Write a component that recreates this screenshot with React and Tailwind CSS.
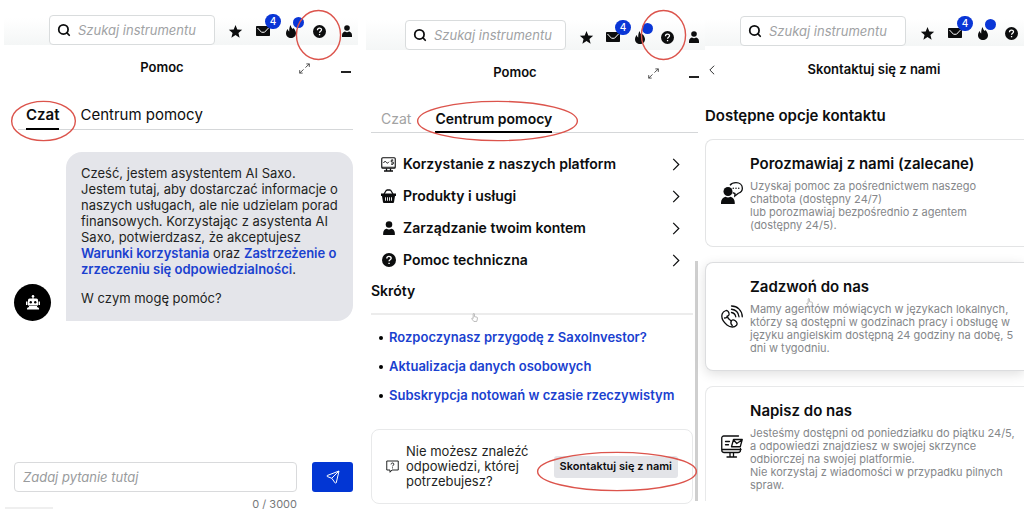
import React from "react";
import { Search } from "lucide-react";

function Ring({ className }) {
  return (
    <svg
      viewBox="0 0 100 100"
      preserveAspectRatio="none"
      className={"pointer-events-none absolute z-10 max-w-none overflow-visible " + className}
      fill="none"
      stroke="#dc544c"
      strokeWidth="1.4"
      aria-hidden="true"
    >
      <ellipse cx="50" cy="50" rx="49" ry="49" vectorEffect="non-scaling-stroke" />
    </svg>
  );
}

function StarIcon() {
  return (
    <svg viewBox="0 0 24 24" className="h-[15px] w-[15px]" fill="currentColor" aria-hidden="true">
      <path d="M12 1.5l2.9 7.3 7.8.5-6 5 1.900 7.700L12 17.700 5.400 22l1.900-7.700-6-5 7.800-.5z" />
    </svg>
  );
}

function MailIcon() {
  return (
    <svg viewBox="0 0 28 20" className="h-[10px] w-[14px]" aria-hidden="true">
      <rect width="28" height="20" rx="1.500" fill="currentColor" />
      <path d="M3 4l8 8.500h6L25 4" fill="none" stroke="#fff" strokeWidth="2" />
    </svg>
  );
}

function FlameIcon() {
  return (
    <svg viewBox="0 0 20 26" className="h-[13px] w-[10px]" aria-hidden="true">
      <path
        d="M9.500 0c.5 4.500 2 6 4 8l1.500-2c3 3.500 5 7 5 10.500C20 22 15.500 26 10 26S0 22 0 16.500C0 12 2.500 9 4 8c0 2 .5 4 2.500 5C6 8 7 3 9.500 0z"
        fill="currentColor"
      />
    </svg>
  );
}

function HelpIcon({ className }) {
  return (
    <svg viewBox="0 0 24 24" className={className} aria-hidden="true">
      <circle cx="12" cy="12" r="12" fill="currentColor" />
      <path
        d="M8.300 9.500c0-5 7.400-4.600 7.400-.6 0 2.700-3.600 2.600-3.600 5.400M12.100 16.600v2.400"
        fill="none"
        stroke="#fff"
        strokeWidth="2.400"
      />
    </svg>
  );
}

function PersonIcon({ className }) {
  return (
    <svg viewBox="0 0 20 24" className={className} fill="currentColor" aria-hidden="true">
      <circle cx="10" cy="6" r="5.600" />
      <path d="M0 24v-3.500C0 15.500 4 13.500 6 13.200c2.500 1.600 5.500 1.600 8 0 2 .3 6 2.300 6 7.300V24z" />
    </svg>
  );
}

function ExpandIcon() {
  return (
    <svg viewBox="0 0 24 24" className="h-[11px] w-[11px]" fill="none" stroke="#333" strokeWidth="1.800" aria-hidden="true">
      <path d="M16 2h6.500v6.500M22.500 2L14 10M8 22H1.500v-6.500M1.500 22L10 14" />
    </svg>
  );
}

function ChevronRight() {
  return (
    <svg viewBox="0 0 8 14" className="h-[13px] w-[8px]" fill="none" stroke="currentColor" strokeWidth="1.300" aria-hidden="true">
      <path d="M1 1l6 6-6 6" />
    </svg>
  );
}

function RobotIcon() {
  return (
    <svg viewBox="0 0 28 30" className="h-[15px] w-[14px]" aria-hidden="true">
      <g fill="#fff">
        <circle cx="14" cy="2.500" r="2.500" />
        <path d="M13 3h2v5h-2zM7 7h14a3 3 0 013 3v11H4V10a3 3 0 013-3zM0 13h3v7H0zM25 13h3v7h-3zM6 22h16v2H6zM2 29a5 4 0 015-5h14a5 4 0 015 5z" />
      </g>
      <circle cx="9.500" cy="14.500" r="2.400" />
      <circle cx="18.500" cy="14.500" r="2.400" />
    </svg>
  );
}

function HandCursor({ className }) {
  return (
    <svg viewBox="0 0 16 20" className={className} fill="#fff" stroke="#9a9a9a" strokeWidth="1.500" aria-hidden="true">
      <path d="M5 12V2.500a1.500 1.500 0 013 0V8l5.500 1.300c1 .3 1.500 1 1.300 2L14 16l-1 3H6.500L2 13.500c-1-1.500.5-2.500 1.500-1.800z" />
    </svg>
  );
}

function PlatformIcon() {
  return (
    <svg viewBox="0 0 30 30" className="h-[15px] w-[15px]" fill="none" stroke="currentColor" strokeWidth="2.200" aria-hidden="true">
      <rect x="1.500" y="1.500" width="27" height="21" rx="2" />
      <path d="M2 20.500h26M5 12c2-4 4-4 5.500-1.500s3 2.500 5.500-1M24.500 6.500h-4v3.500h4v4h-4.500M22.300 4.500v2M22.300 14v2" strokeWidth="1.800" />
      <path d="M11 23v4M19 23v4M6 28h18" strokeWidth="2.600" />
    </svg>
  );
}

function BasketIcon() {
  return (
    <svg viewBox="0 0 30 28" className="h-[14px] w-[15px]" aria-hidden="true">
      <path d="M6 10l5-8M24 10l-5-8M11 2h8" fill="none" stroke="currentColor" strokeWidth="2.600" />
      <path d="M0 9h30v5h-2l-2 12.500a2 2 0 01-2 1.500H6a2 2 0 01-2-1.500L2 14H0z" fill="currentColor" />
      <path d="M9 16.500v7M13 16.500v7M17 16.500v7M21 16.500v7" stroke="#fff" strokeWidth="1.800" />
    </svg>
  );
}

function QuestionBubbleIcon() {
  return (
    <svg viewBox="0 0 26 26" className="h-[13px] w-[13px] shrink-0" fill="none" stroke="currentColor" strokeWidth="1.800" aria-hidden="true">
      <path d="M1.500 2h23v18H12l-4 4.500V20H1.500z" strokeLinejoin="round" />
      <path d="M10.200 8.800c0-3.800 5.600-3.600 5.600-.4 0 2.200-2.800 2.200-2.800 4.400M13 14.800v2" />
    </svg>
  );
}

function AgentChatIcon() {
  return (
    <svg viewBox="0 0 44 44" className="h-[22px] w-[22px] shrink-0" aria-hidden="true">
      <circle cx="14" cy="19" r="9" fill="currentColor" />
      <path d="M0 44v-3c0-6 4-10 9-11.500 3 2 7 2 10 0 5 1.500 8.500 5.500 8.500 11.500v3z" fill="currentColor" />
      <path d="M18 6.500C21 2.500 25.500 1.300 30 1.300c7.500 0 12.700 4.700 12.700 11 0 5-3.200 8.700-8 10.200L27.500 28l.3-5c-2-.3-3.300-1-4.500-1.700" fill="none" stroke="currentColor" strokeWidth="2.600" />
      <g fill="currentColor">
        <circle cx="24.500" cy="12.500" r="1.500" />
        <circle cx="30" cy="12.500" r="1.500" />
        <circle cx="35.500" cy="12.500" r="1.500" />
      </g>
    </svg>
  );
}

function PhoneIcon() {
  return (
    <svg viewBox="0 0 44 46" className="h-[23px] w-[22px] shrink-0" fill="none" stroke="currentColor" strokeWidth="2.600" strokeLinecap="round" strokeLinejoin="round" aria-hidden="true">
      <path d="M9 11.500c3-1.500 6 1 7 5 1 3.500-1.500 5.500-3.500 6 1 4.500 4 7.500 8 9.500 1.500-2.500 4.500-3 8-.5 4 3 4.500 6.500 2.500 9-4 4.500-12 5-19-.5C4 33.500 0 25 2.500 17.500 4 14 6 12.500 9 11.500z" />
      <path d="M7 26c4 0 5.500-1.500 5.500-3.500M20.500 32c-1.500 3-1 6 2 9" />
      <path d="M21 2c12 0 21.500 9.500 21.500 21.500M21 8.500c8 1 14 7 15 15M21 15c4.500.8 7.700 4 8.500 8.500" />
    </svg>
  );
}

function MailDesktopIcon() {
  return (
    <svg viewBox="0 0 44 46" className="h-[23px] w-[22px] shrink-0" fill="none" stroke="currentColor" strokeWidth="2.600" strokeLinecap="round" strokeLinejoin="round" aria-hidden="true">
      <path d="M35 2H5.500a4 4 0 00-4 4v24a5 5 0 005 5H34a5 5 0 005-5v-3M2 29h38" />
      <path d="M18 36v7M25 36v7M12 44h19" />
      <path d="M9 13h8M9 19.500h6" />
      <path d="M25 9h17.500l-4 14.500H21zM25 10l6.500 7L42 10" />
    </svg>
  );
}

function IconButton({ label, children }) {
  return (
    <button type="button" aria-label={label} className="relative flex h-5 w-5 shrink-0 items-center justify-center">
      {children}
    </button>
  );
}

function TopBar({ className, iconClass, ring, profile }) {
  return (
    <div className={"flex items-end bg-linear-to-b from-white from-40% to-[#f4f6f6] " + className}>
      <div className="flex h-[30px] min-w-0 flex-1 items-center gap-[7px] rounded-[4px] border border-[#d9dcdd] bg-white pl-[7px]">
        <Search className="h-[14px] w-[14px] shrink-0" strokeWidth={3} aria-hidden="true" />
        <input
          type="search"
          aria-label="Szukaj instrumentu"
          placeholder="Szukaj instrumentu"
          className="h-full w-full min-w-0 bg-transparent text-[13px] italic outline-none placeholder:text-[#a0a2a4]"
        />
      </div>
      <div className={"flex items-center " + iconClass}>
        <IconButton label="Ulubione">
          <StarIcon />
        </IconButton>
        <IconButton label="Wiadomości">
          <MailIcon />
          <span className="absolute -top-[7px] left-3 flex h-[15px] w-4 items-center justify-center rounded-full bg-[#0a36d6] text-[10px] font-medium text-white">
            4
          </span>
        </IconButton>
        <IconButton label="Aktualności">
          <FlameIcon />
          <span className="absolute -top-1 left-3 h-[11px] w-[11px] rounded-full bg-[#0a36d6]" />
        </IconButton>
        <IconButton label="Pomoc">
          <HelpIcon className="h-[13px] w-[13px]" />
          {ring && <Ring className={ring} />}
        </IconButton>
        {profile && (
          <IconButton label="Profil">
            <PersonIcon className="h-[12px] w-[10px]" />
          </IconButton>
        )}
      </div>
    </div>
  );
}

function PanelHeader({ className }) {
  return (
    <div className={"flex h-[46px] items-center " + className}>
      <h2 className="flex-1 text-center text-[13px] font-semibold">Pomoc</h2>
      <button type="button" aria-label="Rozwiń" className="flex h-5 w-5 items-center justify-center">
        <ExpandIcon />
      </button>
      <button type="button" aria-label="Minimalizuj" className="flex h-5 w-5 items-center justify-center pt-2">
        <span className="h-[2px] w-[10px] bg-[#222]" />
      </button>
    </div>
  );
}

function Tab({ active, muted, ring, children }) {
  return (
    <button
      type="button"
      role="tab"
      aria-selected={!!active}
      className={
        "relative -mb-px h-[29px] border-b-2 pt-[2px] whitespace-nowrap " +
        (active ? "border-black font-semibold" : "border-transparent") +
        (muted ? " text-[#a3a3a3]" : "")
      }
    >
      {children}
      {ring && <Ring className={ring} />}
    </button>
  );
}

function ChatPanel() {
  return (
    <section className="flex min-w-0 flex-col">
      <TopBar
        className="mr-2 ml-1 h-[45px] pr-px pl-[45px]"
        iconClass="mb-1 ml-[10px] gap-2"
        ring="-top-[11px] -left-[13px] h-[50px] w-[45px]"
        profile
      />
      <PanelHeader className="gap-[22px] pr-[10px] pl-[52px]" />
      <div role="tablist" className="mt-[10px] mr-[13px] ml-[18px] flex h-[29px] gap-[21px] border-b border-[#d5d7d9] pl-2 text-[15px]">
        <Tab active ring="top-0 -left-[15px] h-[40px] w-[65px]">Czat</Tab>
        <Tab>Centrum pomocy</Tab>
      </div>
      <div className="mt-[22px] mr-[13px] ml-[14px] flex items-end gap-[15px]">
        <div className="flex h-[37px] w-[37px] shrink-0 items-center justify-center rounded-full bg-black">
          <RobotIcon />
        </div>
        <div className="flex-1 rounded-2xl rounded-bl-none bg-[#e4e5ea] pt-[13px] pr-3 pb-[15px] pl-[15px] text-[13px] leading-4 text-[#1e1f22]">
          <p>
            Cześć, jestem asystentem AI Saxo.
            <br />
            Jestem tutaj, aby dostarczać informacje o naszych usługach, ale nie udzielam porad finansowych. Korzystając z
            asystenta AI Saxo, potwierdzasz, że akceptujesz{" "}
            <a href="#warunki" className="font-semibold text-[#1a41cf]">Warunki korzystania</a> oraz{" "}
            <a href="#zastrzezenie" className="font-semibold text-[#1a41cf]">Zastrzeżenie o zrzeczeniu się odpowiedzialności</a>.
          </p>
          <p className="mt-[13px]">W czym mogę pomóc?</p>
        </div>
      </div>
      <form className="mt-auto mr-[13px] ml-[14px] flex gap-[15px]" onSubmit={(e) => e.preventDefault()}>
        <input
          type="text"
          aria-label="Zadaj pytanie tutaj"
          placeholder="Zadaj pytanie tutaj"
          className="h-[30px] min-w-0 flex-1 rounded-[4px] border border-[#d9dadc] px-2 text-[13px] italic outline-none placeholder:text-[#999b9d]"
        />
        <button type="submit" aria-label="Wyślij" className="flex h-[30px] w-[41px] items-center justify-center rounded-[3px] bg-[#0236d4]">
          <svg viewBox="0 0 28 28" className="h-[14px] w-[14px]" fill="none" stroke="#fff" strokeWidth="2" strokeLinejoin="round" aria-hidden="true">
            <path d="M26 2L2.500 11c-1 .5-1 1.500 0 2l9 3.500L18 25.500c.5 1 2 1 2.500 0zM11.500 16.500L26 2" />
          </svg>
        </button>
      </form>
      <div className="mt-1 mr-[69px] mb-[14px] ml-[5px] flex items-center justify-between">
        <span className="mt-2 h-[2px] w-12 bg-[#efefef]" />
        <span className="text-[11px] leading-4 text-[#76787a]">0 / 3000</span>
      </div>
    </section>
  );
}

const topics = [
  { label: "Korzystanie z naszych platform", icon: <PlatformIcon /> },
  { label: "Produkty i usługi", icon: <BasketIcon /> },
  { label: "Zarządzanie twoim kontem", icon: <PersonIcon className="h-[14px] w-[12px]" /> },
  { label: "Pomoc techniczna", icon: <HelpIcon className="h-[14px] w-[14px]" /> },
];

const shortcuts = [
  "Rozpoczynasz przygodę z SaxoInvestor?",
  "Aktualizacja danych osobowych",
  "Subskrypcja notowań w czasie rzeczywistym",
];

function HelpCentrePanel() {
  return (
    <section className="relative min-w-0">
      <TopBar
        className="h-[50px] pr-px pl-[39px]"
        iconClass="mb-[3px] ml-[10px] gap-[7px]"
        ring="-top-[17px] -left-[16px] h-[50px] w-[45px]"
        profile
      />
      <PanelHeader className="gap-[21px] pr-px pl-[42px]" />
      <div role="tablist" className="mt-2 mr-[7px] ml-[5px] flex h-[29px] gap-6 border-b border-[#d5d7d9] pl-[10px] text-sm">
        <Tab muted>Czat</Tab>
        <Tab active ring="-top-[3px] -left-[19px] h-[40px] w-[163px]">Centrum pomocy</Tab>
      </div>
      <div className="mr-3 ml-[5px]">
        <ul className="mt-[15px]">
          {topics.map((topic) => (
            <li key={topic.label}>
              <button type="button" className="flex h-8 w-full items-center gap-[7px] pr-[13px] pl-[10px] text-left text-sm font-semibold">
                <span className="flex w-[15px] shrink-0 justify-center">{topic.icon}</span>
                <span className="flex-1">{topic.label}</span>
                <ChevronRight />
              </button>
            </li>
          ))}
        </ul>
        <div className="relative mt-[5px] border-b-2 border-[#ececec] pb-3">
          <h3 className="text-sm leading-5 font-semibold">Skróty</h3>
          <HandCursor className="absolute -bottom-[9px] left-[100px] h-[9px] w-[7px]" />
        </div>
        <ul className="mt-2 pl-2">
          {shortcuts.map((text) => (
            <li key={text} className="flex h-[29px] items-center gap-[6px]">
              <span className="h-1 w-1 shrink-0 rounded-full bg-black" />
              <a href="#skrot" className="text-[13px] font-semibold whitespace-nowrap text-[#1a41cf]">{text}</a>
            </li>
          ))}
        </ul>
        <div className="mt-[19px] flex items-center gap-[7px] rounded-lg border border-[#e8e9ea] py-[14px] pr-[14px] pl-[14px]">
          <QuestionBubbleIcon />
          <p className="flex-1 text-[13px] leading-[15px] text-[#1e1f22]">
            Nie możesz znaleźć
            <br />
            odpowiedzi, której
            <br />
            potrzebujesz?
          </p>
          <button type="button" className="relative h-[22px] shrink-0 rounded-[3px] bg-[#e3e4e8] px-[6px] text-[11px] font-semibold">
            Skontaktuj się z nami
            <Ring className="-top-[4px] -left-[18px] h-[39px] w-[162px]" />
          </button>
        </div>
      </div>
      <div className="absolute top-[261px] right-[7px] h-[240px] w-[3px] bg-[#cfcfcf]" />
    </section>
  );
}

function ContactCard({ icon, title, children, className }) {
  return (
    <article className={"flex items-center gap-[7px] border-l border-t bg-white pt-[14px] pr-1 pl-[15px] " + className}>
      {icon}
      <div>
        <h4 className="text-[15px] leading-5 font-semibold">{title}</h4>
        <p className="mt-[6px] text-[11px] leading-[13px] text-[#85878a]">{children}</p>
      </div>
    </article>
  );
}

function ContactPanel() {
  return (
    <section className="min-w-0">
      <TopBar className="h-[46px] pr-[3px] pl-[35px]" iconClass="mb-[3px] ml-[11px] gap-2" />
      <div className="flex h-[47px] items-center">
        <button type="button" aria-label="Wstecz" className="flex h-5 w-[14px] items-center justify-center">
          <svg viewBox="0 0 7 11" className="h-[10px] w-[6px]" fill="none" stroke="currentColor" aria-hidden="true">
            <path d="M6 0.500l-5 5 5 5" />
          </svg>
        </button>
        <h2 className="ml-[5px] flex-1 text-center text-[13px] font-semibold">Skontaktuj się z nami</h2>
      </div>
      <h3 className="mt-[13px] text-[15px] leading-5 font-semibold">Dostępne opcje kontaktu</h3>
      <div className="mt-[13px] flex flex-col gap-[15px]">
        <ContactCard
          icon={<AgentChatIcon />}
          title="Porozmawiaj z nami (zalecane)"
          className="rounded-l-lg border-b border-[#e3e4e5] pb-[14px]"
        >
          Uzyskaj pomoc za pośrednictwem naszego
          <br />
          chatbota (dostępny 24/7)
          <br />
          lub porozmawiaj bezpośrednio z agentem
          <br />
          (dostępny 24/5).
        </ContactCard>
        <div className="relative">
          <ContactCard
            icon={<PhoneIcon />}
            title="Zadzwoń do nas"
            className="rounded-l-lg border-b border-[#dcdddf] pb-[15px] shadow-[0_3px_12px_rgba(0,0,0,0.13)]"
          >
            Mamy agentów mówiących w językach lokalnych, którzy są dostępni w godzinach pracy i obsługę w języku
            angielskim dostępną 24 godziny na dobę, 5 dni w tygodniu.
          </ContactCard>
          <HandCursor className="absolute top-[36px] left-[101px] h-[9px] w-[7px]" />
        </div>
        <ContactCard
          icon={<MailDesktopIcon />}
          title="Napisz do nas"
          className="rounded-tl-lg border-[#e8e9ea] pb-[9px]"
        >
          Jesteśmy dostępni od poniedziałku do piątku 24/5,
          <br />
          a odpowiedzi znajdziesz w swojej skrzynce
          <br />
          odbiorczej na swojej platformie.
          <br />
          Nie korzystaj z wiadomości w przypadku pilnych
          <br />
          spraw.
        </ContactCard>
      </div>
    </section>
  );
}

export default function App() {
  return (
    <main className="grid min-h-screen grid-cols-[366fr_339fr_319fr] overflow-hidden bg-white font-['Inter',sans-serif] text-[#0c0d0e]">
      <ChatPanel />
      <HelpCentrePanel />
      <ContactPanel />
    </main>
  );
}
